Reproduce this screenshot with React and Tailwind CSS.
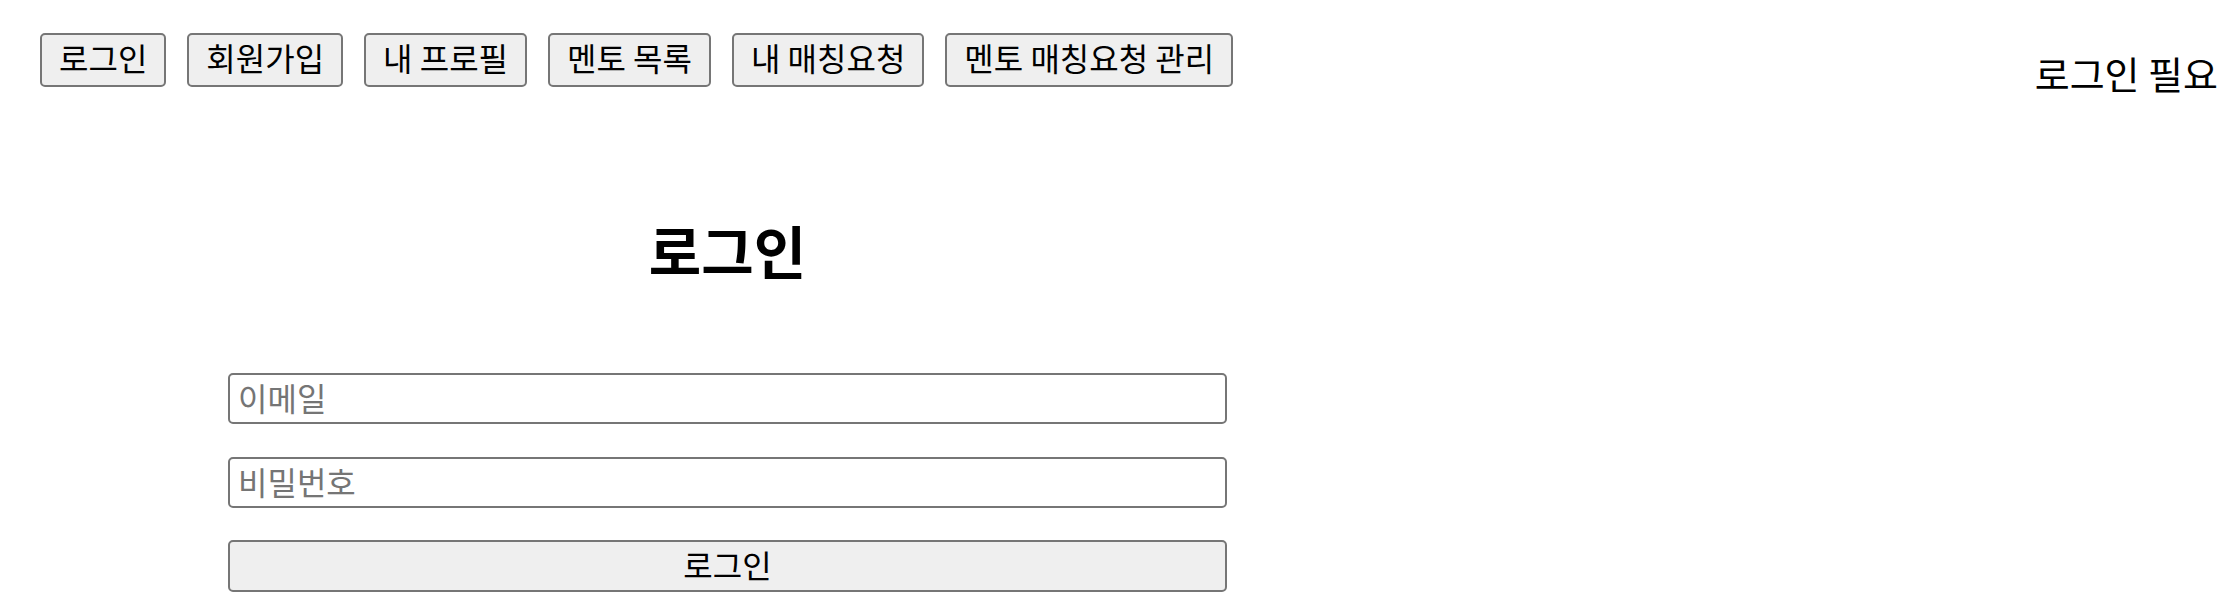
const navItems = ["로그인", "회원가입", "내 프로필", "멘토 목록", "내 매칭요청", "멘토 매칭요청 관리"];

export default function App() {
  return (
    <div className="min-h-screen bg-white text-black font-['Noto_Sans_CJK_KR','Noto_Sans',sans-serif]">
      <header className="flex items-start justify-between pl-[40px] pr-[14px] pt-[33px]">
        <nav className="flex gap-[21px]">
          {navItems.map((label) => (
            <button
              key={label}
              type="button"
              className="h-[54px] px-[17px] pb-[6px] border-2 border-[#767676] rounded-[5px] bg-[#efefef] text-[32px] leading-[42px] whitespace-nowrap"
            >
              {label}
            </button>
          ))}
        </nav>
        <span className="mt-[15px] text-[38px] leading-[50px] whitespace-nowrap">로그인 필요</span>
      </header>

      <main className="ml-[228px] w-[999px]">
        <h2 className="mt-[114px] text-center text-[57px] font-bold leading-[75px]">로그인</h2>
        <form className="mt-[86px] flex flex-col" onSubmit={(e) => e.preventDefault()}>
          <input
            type="email"
            placeholder="이메일"
            className="h-[51px] px-[8px] pb-[4px] border-2 border-[#767676] rounded-[5px] bg-white text-[32px] placeholder:text-[#757575] outline-none"
          />
          <input
            type="password"
            placeholder="비밀번호"
            className="mt-[33px] h-[51px] px-[8px] pb-[4px] border-2 border-[#767676] rounded-[5px] bg-white text-[32px] placeholder:text-[#757575] outline-none"
          />
          <button
            type="submit"
            className="mt-[32px] h-[52px] pb-[4px] border-2 border-[#767676] rounded-[5px] bg-[#efefef] text-[32px] leading-[42px]"
          >
            로그인
          </button>
        </form>
      </main>
    </div>
  );
}
